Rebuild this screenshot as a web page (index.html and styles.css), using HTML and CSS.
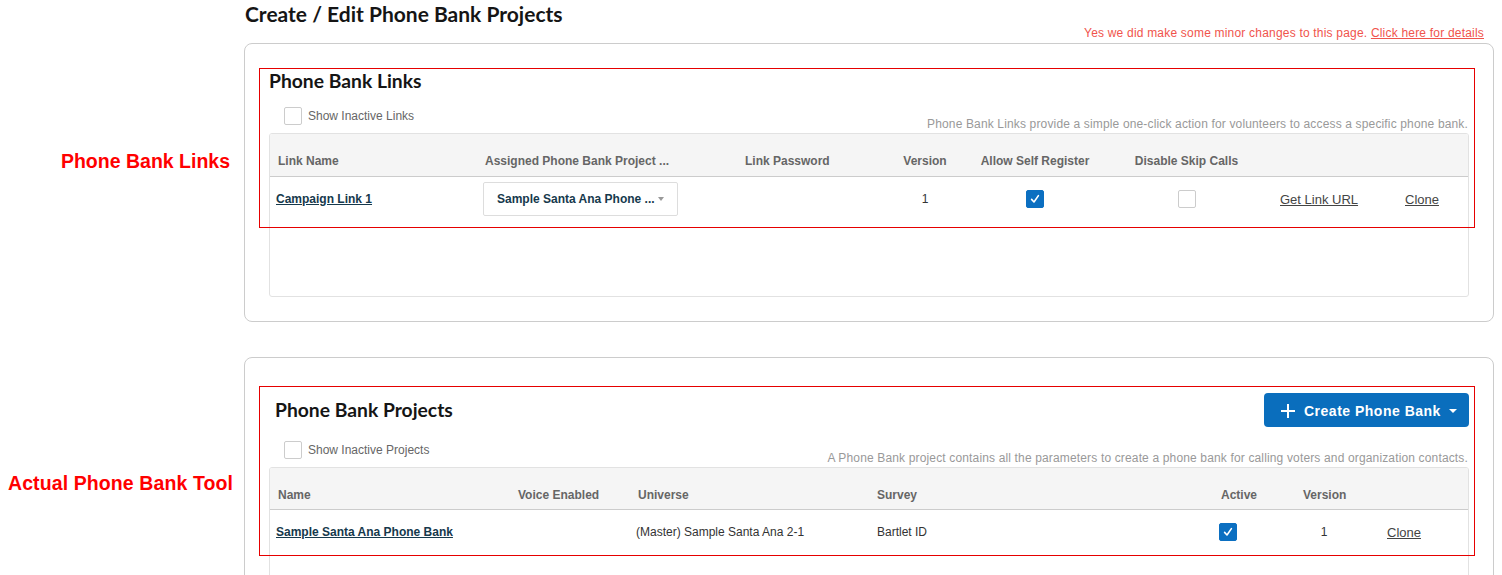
FILE: index.html
```html
<!DOCTYPE html>
<html lang="en">
<head>
    <meta charset="UTF-8">
    <title>Create / Edit Phone Bank Projects</title>
    <link rel="stylesheet" href="styles.css">
</head>
<body>
    <div class="page">
        <div class="page-head">
            <h1 class="page-title">Create / Edit Phone Bank Projects</h1>
            <p class="notice">Yes we did make some minor changes to this page. <a href="#">Click here for details</a></p>
        </div>

        <div class="side-note note-links">Phone Bank Links</div>
        <section class="panel panel-links">
            <div class="callout callout-links"></div>
            <h2 class="panel-title">Phone Bank Links</h2>
            <div class="toolbar">
                <label class="toggle"><span class="box"></span>Show Inactive Links</label>
                <p class="hint">Phone Bank Links provide a simple one-click action for volunteers to access a specific phone bank.</p>
            </div>
            <div class="grid-box">
                <table class="grid">
                    <colgroup>
                        <col style="width:207px"><col style="width:260px"><col style="width:148px"><col style="width:80px">
                        <col style="width:140px"><col style="width:163px"><col style="width:129px"><col style="width:72px">
                    </colgroup>
                    <thead>
                        <tr>
                            <th>Link Name</th>
                            <th>Assigned Phone Bank Project ...</th>
                            <th>Link Password</th>
                            <th class="center">Version</th>
                            <th class="center">Allow Self Register</th>
                            <th class="center">Disable Skip Calls</th>
                            <th></th>
                            <th></th>
                        </tr>
                    </thead>
                    <tbody>
                        <tr>
                            <td class="name-cell"><a href="#" class="name-link">Campaign Link 1</a></td>
                            <td>
                                <div class="select"><span>Sample Santa Ana Phone ...</span><span class="caret"></span></div>
                            </td>
                            <td></td>
                            <td class="center">1</td>
                            <td class="center"><span class="box checked"><svg width="10" height="10" viewBox="0 0 10 10"><path d="M1.6 5.4 L4 8 L8.4 1.6" fill="none" stroke="#fff" stroke-width="1.6" stroke-linecap="round" stroke-linejoin="round"/></svg></span></td>
                            <td class="center"><span class="box"></span></td>
                            <td class="url-cell"><a href="#" class="action">Get Link URL</a></td>
                            <td><a href="#" class="action">Clone</a></td>
                        </tr>
                    </tbody>
                </table>
            </div>
        </section>

        <div class="side-note note-tool">Actual Phone Bank Tool</div>
        <section class="panel panel-projects">
            <div class="callout callout-projects"></div>
            <div class="projects-head">
                <h2 class="panel-title">Phone Bank Projects</h2>
                <button class="btn-create">
                    <svg class="plus" width="16" height="16" viewBox="0 0 16 16"><path d="M8 1 V15 M1 8 H15" stroke="#fff" stroke-width="2"/></svg>
                    <span>Create Phone Bank</span>
                    <span class="caret caret-white"></span>
                </button>
            </div>
            <div class="toolbar">
                <label class="toggle"><span class="box"></span>Show Inactive Projects</label>
                <p class="hint">A Phone Bank project contains all the parameters to create a phone bank for calling voters and organization contacts.</p>
            </div>
            <div class="grid-box">
                <table class="grid">
                    <colgroup>
                        <col style="width:240px"><col style="width:120px"><col style="width:239px"><col style="width:344px">
                        <col style="width:82px"><col style="width:58px"><col style="width:116px">
                    </colgroup>
                    <thead>
                        <tr>
                            <th>Name</th>
                            <th>Voice Enabled</th>
                            <th>Universe</th>
                            <th>Survey</th>
                            <th>Active</th>
                            <th class="center">Version</th>
                            <th></th>
                        </tr>
                    </thead>
                    <tbody>
                        <tr>
                            <td class="name-cell"><a href="#" class="name-link">Sample Santa Ana Phone Bank</a></td>
                            <td></td>
                            <td class="shift">(Master) Sample Santa Ana 2-1</td>
                            <td>Bartlet ID</td>
                            <td class="shift"><span class="box checked"><svg width="10" height="10" viewBox="0 0 10 10"><path d="M1.6 5.4 L4 8 L8.4 1.6" fill="none" stroke="#fff" stroke-width="1.6" stroke-linecap="round" stroke-linejoin="round"/></svg></span></td>
                            <td class="center">1</td>
                            <td class="clone-cell"><a href="#" class="action">Clone</a></td>
                        </tr>
                    </tbody>
                </table>
            </div>
        </section>
    </div>
</body>
</html>
```

FILE: styles.css
```css
body {
    margin: 0;
    font-family: "Liberation Sans", Arial, sans-serif;
    font-size: 12px;
    color: #333;
    background: #fff;
    overflow: hidden;
}
.page {
    display: grid;
    grid-template-columns: 244px 1250px;
    align-items: start;
}
.page-head {
    grid-column: 2;
    grid-row: 1;
}
.page-title {
    font-family: Lato, sans-serif;
    font-weight: 700;
    font-size: 21px;
    line-height: 24px;
    margin: 0;
    padding: 2px 0 0 1px;
    color: #151515;
}
.notice {
    margin: 0 10px 3px 0;
    text-align: right;
    line-height: 14px;
    letter-spacing: 0.2px;
    color: #f0544c;
}
.notice a {
    color: inherit;
}

/* red annotations */
.side-note {
    grid-column: 1;
    text-align: right;
    padding-right: 11px;
    font-weight: bold;
    font-size: 19.5px;
    line-height: 22px;
    color: #f00;
}
.note-links {
    grid-row: 2;
    margin-top: 107px;
    padding-right: 14px;
}
.note-tool {
    grid-row: 3;
    margin-top: 150px;
    letter-spacing: 0.1px;
}
.callout {
    position: absolute;
    left: 14px;
    width: 1216px;
    box-sizing: border-box;
    border: 1px solid #e60000;
    pointer-events: none;
}
.callout-links {
    top: 24px;
    height: 160px;
}
.callout-projects {
    top: 28px;
    height: 170px;
}

/* panels */
.panel {
    grid-column: 2;
    position: relative;
    border: 1px solid #ccc;
    border-radius: 8px;
    padding: 26px 24px 24px;
}
.panel-links {
    grid-row: 2;
}
.panel-projects {
    grid-row: 3;
    margin-top: 35px;
    padding-top: 35px;
}
.panel-title {
    font-family: Lato, sans-serif;
    font-weight: 700;
    font-size: 19.3px;
    line-height: 22px;
    margin: 0;
    color: #151515;
}
.projects-head {
    display: flex;
    justify-content: space-between;
    align-items: center;
    height: 34px;
}
.projects-head .panel-title {
    padding-left: 6px;
}
.btn-create {
    display: flex;
    align-items: center;
    width: 205px;
    height: 34px;
    box-sizing: border-box;
    padding: 1px 12px 0 16px;
    border: none;
    border-radius: 4px;
    background: #0a6ebd;
    color: #fff;
    font-family: "Liberation Sans", Arial, sans-serif;
    font-weight: bold;
    font-size: 14px;
    letter-spacing: 0.5px;
    cursor: pointer;
}
.btn-create .plus {
    margin-right: 8px;
}
.btn-create .caret {
    margin-left: auto;
}

.toolbar {
    display: flex;
    justify-content: space-between;
    align-items: flex-end;
    height: 41px;
}
.panel-projects .toolbar {
    height: 40px;
}
.toggle {
    display: flex;
    align-items: center;
    gap: 6px;
    margin: 0 0 8px 15px;
    padding-top: 1px;
    color: #666;
}
.hint {
    margin: 0 1px 2px 0;
    line-height: 14px;
    letter-spacing: 0.15px;
    color: #999;
}
.box {
    display: inline-flex;
    align-items: center;
    justify-content: center;
    width: 18px;
    height: 18px;
    box-sizing: border-box;
    border: 1px solid #ccc;
    border-radius: 2px;
    background: #fff;
    vertical-align: middle;
}
.box.checked {
    background: #0b6fc1;
    border-color: #0b6fc1;
}

/* tables */
.grid-box {
    height: 164px;
    box-sizing: border-box;
    border: 1px solid #e2e2e2;
    border-radius: 3px;
    overflow: hidden;
}
.grid {
    width: 1199px;
    table-layout: fixed;
    border-collapse: collapse;
}
.grid th {
    background: #f5f5f5;
    color: #666;
    font-weight: bold;
    text-align: left;
    line-height: 14px;
    padding: 20px 8px 8px;
    border-bottom: 1px solid #ccc;
    white-space: nowrap;
}
.panel-projects .grid th {
    padding-top: 20px;
    padding-bottom: 7px;
}
.grid td {
    height: 34px;
    padding: 5px 8px;
    vertical-align: middle;
    white-space: nowrap;
}
.grid .center {
    text-align: center;
}
.grid td.name-cell {
    padding-left: 6px;
}
.grid td.shift {
    padding-left: 6px;
}
.grid td.url-cell {
    padding-left: 12px;
}
.grid td.clone-cell {
    padding-left: 34px;
}
.name-link {
    color: #16394c;
    font-weight: bold;
}
.action {
    color: #444;
    font-size: 13px;
}
.select {
    display: flex;
    align-items: center;
    justify-content: space-between;
    width: 195px;
    height: 34px;
    box-sizing: border-box;
    margin-left: -2px;
    padding: 0 13px 0 13px;
    border: 1px solid #ddd;
    border-radius: 2px;
    font-weight: bold;
    color: #16394c;
}
.caret {
    width: 0;
    height: 0;
    border-left: 3.5px solid transparent;
    border-right: 3.5px solid transparent;
    border-top: 4px solid #999;
}
.caret-white {
    border-left-width: 4px;
    border-right-width: 4px;
    border-top-color: #fff;
}
```
